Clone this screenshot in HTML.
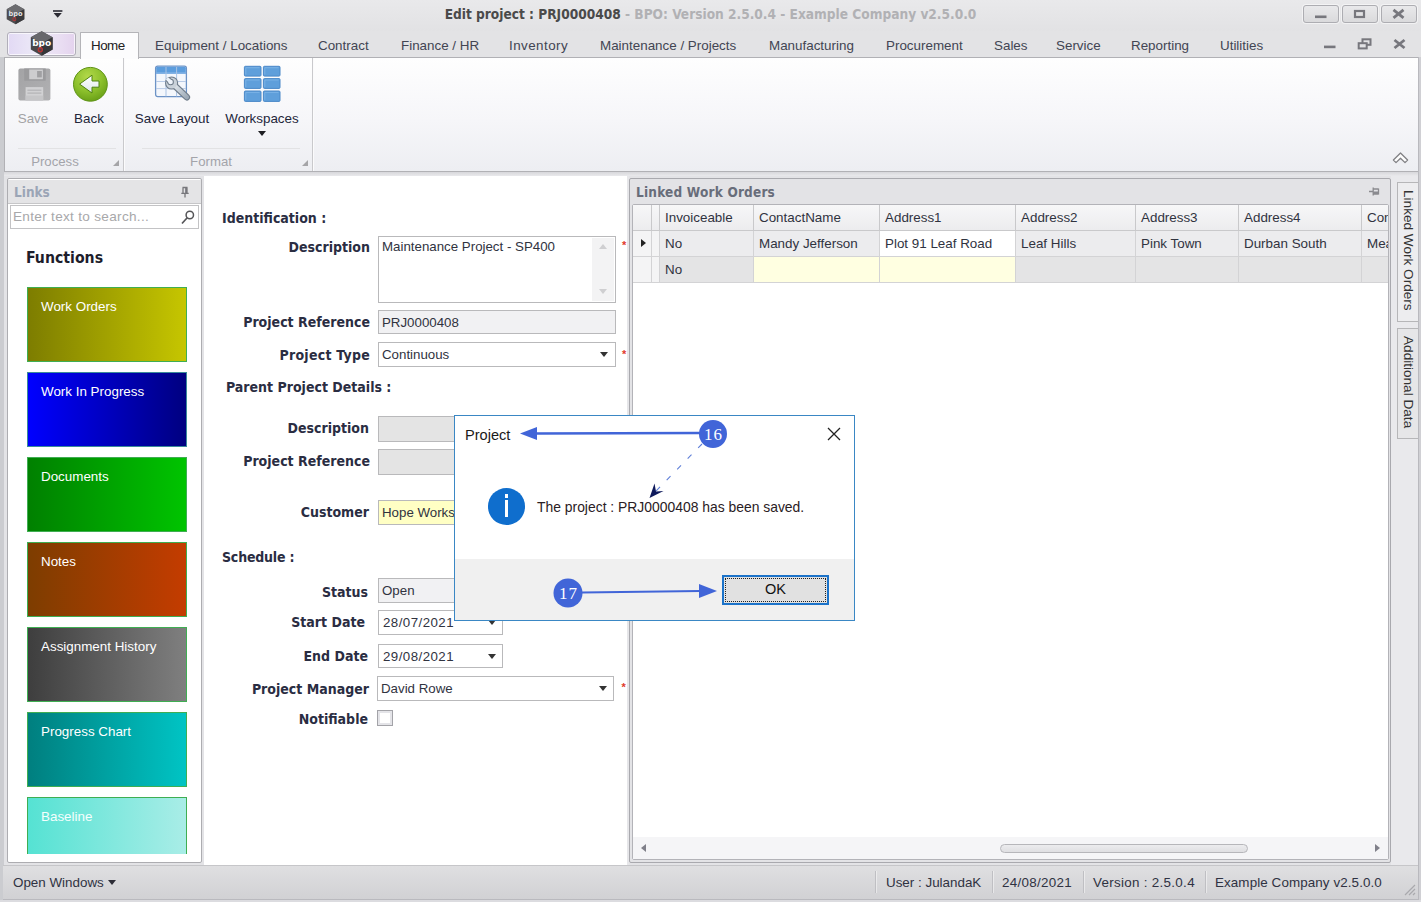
<!DOCTYPE html>
<html lang="en">
<head>
<meta charset="utf-8">
<title>Edit project : PRJ0000408</title>
<style>
*{box-sizing:border-box;margin:0;padding:0}
html,body{width:1421px;height:902px;overflow:hidden}
body{position:relative;background:#e3e3e6;font-family:"Liberation Sans",sans-serif;font-size:13.4px;color:#2a2c38}
.abs{position:absolute}
.t{position:absolute;white-space:nowrap;line-height:16px}
.b{font-family:"DejaVu Sans Condensed","Liberation Sans",sans-serif;font-weight:bold}
/* title bar */
#titlebar{left:0;top:0;width:1421px;height:31px;background:linear-gradient(#e9e9eb,#e2e2e4)}
#title{left:0;width:1421px;top:6px;text-align:center;font-size:13.6px;color:#4a4a4a}
#title span{color:#b1b1b4}
.wbtn{position:absolute;top:5px;height:18px;width:36px;border:1px solid #adadb2;border-radius:3px;background:linear-gradient(#e9e9eb,#dadadc);box-shadow:0 0 0 1px rgba(255,255,255,.5)}
/* tabs */
#tabrow{left:0;top:31px;width:1421px;height:27px;background:#e3e3e5}
.tab{position:absolute;top:38px;font-size:13.4px;color:#424553;white-space:nowrap;line-height:16px}
#hometab{left:80px;top:32px;width:59px;height:27px;background:#fcfcfd;border:1px solid #b4b4b8;border-bottom:none;border-radius:1px 1px 0 0}
#appbtn{left:7px;top:32px;width:69px;height:24px;border:1px solid #b1afb9;border-radius:3px;background:linear-gradient(90deg,#e2d9f4,#ece9f7 40%,#eadff3 75%,#e4d3ee);box-shadow:inset 0 0 0 1px rgba(255,255,255,.7)}
/* ribbon */
#ribbon{left:4px;top:57px;width:1415px;height:115px;border:1px solid #b1b1b5;background:linear-gradient(#fefefe,#f6f6f9 55%,#edeef2)}
.rlabel{position:absolute;font-size:13.4px;color:#23263a;line-height:16px;white-space:nowrap;text-align:center}
.gcap{position:absolute;top:153.7px;font-size:13.2px;color:#a3a4aa;line-height:16px;text-align:center}
.gsep{position:absolute;top:58px;width:1px;height:113px;background:#c9c9cc;box-shadow:1px 0 0 #fbfbfc}
/* panels */
.panel{position:absolute;border:1px solid #b4b4b6;background:#fff;border-radius:2px}
.phead{position:absolute;left:0;top:0;right:0;height:24px;background:#e2e2e4;border-bottom:1px solid #c8c8ca}
/* form */
.lbl{position:absolute;text-align:right;font-size:14px;color:#2a2d42;white-space:nowrap;line-height:17px}
.inp{position:absolute;border:1px solid #b9b9bb;background:#fff;font-size:13.3px;line-height:16px;padding:4px 0 0 3px;color:#30333f;white-space:nowrap;overflow:hidden}
.inp.ro{background:#f1f1f3}
.inp.dis{background:#e4e4e4}
.arr{position:absolute;width:0;height:0;border-left:4px solid transparent;border-right:4px solid transparent;border-top:5px solid #333}
.req{position:absolute;color:#e0392b;font-size:11px;font-weight:bold;line-height:10px}
/* tiles */
.tile{position:absolute;left:27px;width:160px;height:75px;border:1px solid #3fae52;color:#fff;font-size:13.4px;padding:10.6px 0 0 13px;line-height:16px}
/* grid */
.gh{position:absolute;top:205px;height:26px;border-right:1px solid #c9c9cb;border-bottom:1px solid #c9c9cb;background:linear-gradient(#f7f7f8,#ececee);font-size:13.4px;line-height:16px;padding:5px 0 0 5px;color:#30333f;overflow:hidden;white-space:nowrap}
.gc{position:absolute;height:26px;border-right:1px solid #d3d3d5;border-bottom:1px solid #d3d3d5;font-size:13.4px;line-height:16px;padding:5px 0 0 5px;color:#30333f;overflow:hidden;white-space:nowrap}
/* status */
#status{left:3px;top:865px;width:1415px;height:35px;background:linear-gradient(#dfdfe1,#d1d1d4);border-top:1px solid #c6c6c9;border-bottom:1px solid #b9b9be}
.st{position:absolute;top:875px;font-size:13.4px;color:#2f3242;line-height:16px;white-space:nowrap}
.ssep{position:absolute;top:871px;width:1px;height:22px;background:#bfbfc3;box-shadow:1px 0 0 rgba(255,255,255,.45)}
</style>
</head>
<body>
<!-- TITLE BAR -->
<div id="titlebar" class="abs"></div>
<div id="title" class="t b">Edit project : PRJ0000408<span> - BPO: Version 2.5.0.4 - Example Company v2.5.0.0</span></div>
<!-- TABS -->
<div id="tabrow" class="abs"></div>
<div id="appbtn" class="abs"></div>
<div id="ribbon" class="abs"></div>
<div id="hometab" class="abs"></div>
<div class="tab" style="left:91px;color:#222;letter-spacing:-.5px">Home</div>
<div class="tab" style="left:155px">Equipment / Locations</div>
<div class="tab" style="left:318px">Contract</div>
<div class="tab" style="left:401px">Finance / HR</div>
<div class="tab" style="left:509px;letter-spacing:.45px">Inventory</div>
<div class="tab" style="left:600px">Maintenance / Projects</div>
<div class="tab" style="left:769px">Manufacturing</div>
<div class="tab" style="left:886px">Procurement</div>
<div class="tab" style="left:994px">Sales</div>
<div class="tab" style="left:1056px">Service</div>
<div class="tab" style="left:1131px">Reporting</div>
<div class="tab" style="left:1220px">Utilities</div>
<!-- RIBBON CONTENT -->
<div class="rlabel" style="left:8px;width:50px;top:110.5px;color:#a3a3a5">Save</div>
<div class="rlabel" style="left:64px;width:50px;top:110.5px">Back</div>
<div class="rlabel" style="left:127px;width:90px;top:110.5px">Save Layout</div>
<div class="rlabel" style="left:217px;width:90px;top:110.5px">Workspaces</div>
<div class="gcap" style="left:5px;width:100px">Process</div>
<div class="gcap" style="left:124px;width:174px">Format</div>
<div class="gsep" style="left:123px"></div>
<div class="gsep" style="left:312px"></div>

<!-- WINDOW EDGES -->
<div class="abs" style="left:0;top:57px;width:3.5px;height:845px;background:#cbccd0"></div>
<div class="abs" style="left:1418px;top:57px;width:1px;height:845px;background:#b9b9be"></div>
<div class="abs" style="left:1419px;top:57px;width:2px;height:845px;background:#d0d0d4"></div>
<div class="abs" style="left:0;top:900px;width:1421px;height:2px;background:#dcdce0"></div>
<!-- LINKS PANEL -->
<div class="panel" style="left:7px;top:178px;width:195px;height:685px;border-color:#adadb1"></div>
<div class="abs" style="left:8px;top:180px;width:193px;height:24px;background:#e4e4e6;border-bottom:1px solid #c6c6c8"></div>
<div class="t b" style="left:14px;top:184px;font-size:13.5px;color:#9ba5b6">Links</div>
<div class="abs" style="left:10px;top:205px;width:189px;height:24px;border:1px solid #c3c3c5;background:#fff"></div>
<div class="t" style="left:13px;top:209px;font-size:13.6px;letter-spacing:.3px;color:#a8a8aa">Enter text to search...</div>
<div class="t b" style="left:26px;top:248px;font-size:15.7px;line-height:20px;color:#1d1d2b">Functions</div>
<div class="tile" style="top:287px;background:linear-gradient(90deg,#7d7d00,#c6c600)">Work Orders</div>
<div class="tile" style="top:372px;background:linear-gradient(90deg,#0000ff,#000080);border-color:#3a8a9a">Work In Progress</div>
<div class="tile" style="top:457px;background:linear-gradient(90deg,#008000,#00c400)">Documents</div>
<div class="tile" style="top:542px;background:linear-gradient(90deg,#7d3d00,#c43c00)">Notes</div>
<div class="tile" style="top:627px;background:linear-gradient(90deg,#3e3e3e,#7f7f7f)">Assignment History</div>
<div class="tile" style="top:712px;background:linear-gradient(90deg,#007f7f,#00c4c4)">Progress Chart</div>
<div class="tile" style="top:797px;height:57px;border-bottom:none;background:linear-gradient(90deg,#55e2d3,#a9ede7);color:#f4fffd">Baseline</div>
<!-- FORM AREA -->
<div class="abs" style="left:4px;top:172px;width:1414px;height:4px;background:linear-gradient(#d7d7db,#e9e9ec)"></div>
<div class="abs" style="left:204px;top:176px;width:423px;height:689px;background:#fff"></div>
<div class="abs" style="left:627px;top:176px;width:2px;height:689px;background:#e6e6e9"></div>
<div class="lbl b" style="left:222px;top:210px;text-align:left">Identification :</div>
<div class="lbl b" style="left:200px;width:170px;top:239px">Description</div>
<div class="lbl b" style="left:200px;width:170px;top:314px">Project Reference</div>
<div class="lbl b" style="left:200px;width:170px;top:347px;letter-spacing:.25px">Project Type</div>
<div class="lbl b" style="left:226px;top:379px;text-align:left">Parent Project Details :</div>
<div class="lbl b" style="left:200px;width:169px;top:420px">Description</div>
<div class="lbl b" style="left:200px;width:170px;top:453px">Project Reference</div>
<div class="lbl b" style="left:200px;width:169px;top:504px">Customer</div>
<div class="lbl b" style="left:222px;top:549px;text-align:left;letter-spacing:-.2px">Schedule :</div>
<div class="lbl b" style="left:200px;width:168px;top:584px">Status</div>
<div class="lbl b" style="left:200px;width:165px;top:614px">Start Date</div>
<div class="lbl b" style="left:200px;width:168px;top:648px">End Date</div>
<div class="lbl b" style="left:200px;width:169px;top:681px">Project Manager</div>
<div class="lbl b" style="left:200px;width:168px;top:711px">Notifiable</div>
<div class="inp" style="left:378px;top:236px;width:238px;height:67px;padding-top:2px">Maintenance Project - SP400</div>
<div class="abs" style="left:592px;top:238px;width:22px;height:63px;background:#f3f3f4"></div>
<div class="arr" style="left:599px;top:244px;border-top:none;border-bottom:5px solid #cfcfd1"></div>
<div class="arr" style="left:599px;top:289px;border-top-color:#cfcfd1"></div>
<div class="inp ro" style="left:378px;top:310px;width:238px;height:24px">PRJ0000408</div>
<div class="inp" style="left:378px;top:342px;width:238px;height:25px">Continuous</div>
<div class="arr" style="left:600px;top:352px"></div>
<div class="inp dis" style="left:378px;top:416px;width:120px;height:26px"></div>
<div class="inp dis" style="left:378px;top:449px;width:120px;height:26px"></div>
<div class="inp" style="left:378px;top:500px;width:120px;height:25px;background:#ffffc4">Hope Works</div>
<div class="inp ro" style="left:378px;top:577.5px;width:120px;height:25px">Open</div>
<div class="inp" style="left:378px;top:610px;width:125px;height:25px;letter-spacing:.45px;padding-left:4px">28/07/2021</div>
<div class="arr" style="left:488px;top:620px"></div>
<div class="inp" style="left:378px;top:644px;width:125px;height:24px;letter-spacing:.45px;padding-left:4px">29/08/2021</div>
<div class="arr" style="left:488px;top:654px"></div>
<div class="inp" style="left:377px;top:676px;width:237px;height:25px">David Rowe</div>
<div class="arr" style="left:599px;top:686px"></div>
<div class="abs" style="left:377px;top:710px;width:16px;height:16px;border:1px solid #a3a3a8;background:#fff;box-shadow:inset 0 0 0 2px #e4e4e8"></div>
<div class="req" style="left:622px;top:240px">*</div>
<div class="req" style="left:622px;top:349px">*</div>
<div class="req" style="left:621.5px;top:682px">*</div>
<!-- GRID PANEL -->
<div class="panel" style="left:629px;top:178px;width:762px;height:685px;border-color:#a9a9ae;background:#e3e3e6"></div>
<div class="panel" style="left:632px;top:204px;width:757px;height:656px;border-color:#b3b3b8"></div>
<div class="t b" style="left:636px;top:183.7px;font-size:13.5px;letter-spacing:.2px;color:#686d7a">Linked Work Orders</div>
<div class="gh" style="left:633px;width:19px"></div>
<div class="gh" style="left:652px;width:8px"></div>
<div class="gh" style="left:660px;width:94px">Invoiceable</div>
<div class="gh" style="left:754px;width:126px">ContactName</div>
<div class="gh" style="left:880px;width:136px">Address1</div>
<div class="gh" style="left:1016px;width:120px">Address2</div>
<div class="gh" style="left:1136px;width:103px">Address3</div>
<div class="gh" style="left:1239px;width:123px">Address4</div>
<div class="gh" style="left:1362px;width:26px;border-right:none">Con</div>
<!-- row 1 -->
<div class="gc" style="top:231px;left:633px;width:19px;background:#f4f4f5"></div>
<div class="gc" style="top:231px;left:652px;width:8px;background:#f4f4f5"></div>
<div class="gc" style="top:231px;left:660px;width:94px;background:#ececee">No</div>
<div class="gc" style="top:231px;left:754px;width:126px;background:#ececee">Mandy Jefferson</div>
<div class="gc" style="top:231px;left:880px;width:136px;background:#fff">Plot 91 Leaf Road</div>
<div class="gc" style="top:231px;left:1016px;width:120px;background:#ececee">Leaf Hills</div>
<div class="gc" style="top:231px;left:1136px;width:103px;background:#ececee">Pink Town</div>
<div class="gc" style="top:231px;left:1239px;width:123px;background:#ececee">Durban South</div>
<div class="gc" style="top:231px;left:1362px;width:26px;background:#ececee;border-right:none">Mea</div>
<!-- row 2 -->
<div class="gc" style="top:257px;left:633px;width:19px;background:#f4f4f5"></div>
<div class="gc" style="top:257px;left:652px;width:8px;background:#f4f4f5"></div>
<div class="gc" style="top:257px;left:660px;width:94px;background:#e4e4e5">No</div>
<div class="gc" style="top:257px;left:754px;width:126px;background:#ffffe1"></div>
<div class="gc" style="top:257px;left:880px;width:136px;background:#ffffe1"></div>
<div class="gc" style="top:257px;left:1016px;width:120px;background:#e4e4e5"></div>
<div class="gc" style="top:257px;left:1136px;width:103px;background:#e4e4e5"></div>
<div class="gc" style="top:257px;left:1239px;width:123px;background:#e4e4e5"></div>
<div class="gc" style="top:257px;left:1362px;width:26px;background:#e4e4e5;border-right:none"></div>
<div class="abs" style="left:641px;top:239px;width:0;height:0;border-top:4.5px solid transparent;border-bottom:4.5px solid transparent;border-left:5px solid #222"></div>
<!-- scrollbar -->
<div class="abs" style="left:633px;top:837px;width:755px;height:22px;background:#f5f5f7"></div>
<div class="abs" style="left:1000px;top:844px;width:248px;height:9px;border:1px solid #b6b6ba;border-radius:5px;background:linear-gradient(#ececee,#dfdfe2)"></div>
<div class="abs" style="left:640.5px;top:844px;width:0;height:0;border-top:4px solid transparent;border-bottom:4px solid transparent;border-right:5px solid #80808a"></div>
<div class="abs" style="left:1375px;top:844px;width:0;height:0;border-top:4px solid transparent;border-bottom:4px solid transparent;border-left:5px solid #80808a"></div>
<!-- RIGHT TABS -->
<div class="abs" style="left:1391px;top:176px;width:27px;height:689px;background:#e9e9ec"></div>
<div class="abs" style="left:1397px;top:182px;width:21px;height:140px;border:1px solid #b6b6b8;border-right:none;background:#ededef"></div>
<div class="abs" style="left:1397px;top:328px;width:21px;height:111px;border:1px solid #b6b6b8;border-right:none;background:#e6e6e8"></div>
<div class="t" style="left:1400px;top:190px;writing-mode:vertical-rl;font-size:13.6px;color:#333;line-height:16px">Linked Work Orders</div>
<div class="t" style="left:1400px;top:336px;writing-mode:vertical-rl;font-size:13.6px;color:#333;line-height:16px">Additional Data</div>

<!-- DIALOG -->
<div class="abs" style="left:454px;top:415px;width:401px;height:206px;border:1px solid #3a87c4;background:#fff"></div>
<div class="abs" style="left:455px;top:559px;width:399px;height:61px;background:#f0f0f0"></div>
<div class="t" style="left:465px;top:425.6px;font-size:14.6px;line-height:18px;color:#1a1a1a">Project</div>
<svg class="abs" style="left:826px;top:426px" width="16" height="16" viewBox="0 0 16 16"><path d="M2 2 L14 14 M14 2 L2 14" stroke="#222" stroke-width="1.3" fill="none"/></svg>
<div class="abs" style="left:487.5px;top:488px;width:37.5px;height:37px;border-radius:50%;background:#0f6ecd"></div>
<div class="abs" style="left:504.5px;top:494px;width:3px;height:3.5px;background:#fff"></div>
<div class="abs" style="left:504.5px;top:500px;width:3px;height:17px;background:#fff"></div>
<div class="t" style="left:537px;top:497.8px;font-size:13.9px;line-height:18px;color:#2a2024">The project : PRJ0000408 has been saved.</div>
<div class="abs" style="left:722px;top:575px;width:107px;height:30px;border:2px solid #1c73c9;background:#e1e1e1"></div>
<div class="abs" style="left:725px;top:578px;width:101px;height:24px;border:1px dotted #222"></div>
<div class="t" style="left:722px;width:107px;top:580px;text-align:center;font-size:14.5px;line-height:18px;color:#111">OK</div>
<!-- ANNOTATIONS -->
<svg class="abs" style="left:0;top:0;pointer-events:none" width="1421" height="902" viewBox="0 0 1421 902">
<line x1="536" y1="433.5" x2="700" y2="433" stroke="#4165d8" stroke-width="2.4"/>
<polygon points="520,433.5 537,427 537,440" fill="#4165d8"/>
<circle cx="713" cy="434" r="14" fill="#4165d8"/>
<text x="713.4" y="440" text-anchor="middle" font-family="'Liberation Serif',serif" font-size="17" letter-spacing=".8" fill="#fff">16</text>
<line x1="702" y1="444" x2="656" y2="491" stroke="#5f7fd8" stroke-width="1.1" stroke-dasharray="5.5 9.5"/>
<path d="M649.5 498 L654.5 483.5 L656 491.5 L663.5 491 Z" fill="#0f1a5c"/>
<circle cx="568" cy="593" r="14.5" fill="#4165d8"/>
<text x="568.4" y="599" text-anchor="middle" font-family="'Liberation Serif',serif" font-size="17" letter-spacing=".8" fill="#fff">17</text>
<line x1="582" y1="592.5" x2="700" y2="591" stroke="#4165d8" stroke-width="2.2"/>
<polygon points="717,591 699,584 699,598" fill="#4165d8"/>
</svg>
<!-- STATUS BAR -->
<!--ICONS-->
<div id="status" class="abs"></div>
<div class="st" style="left:13px">Open Windows</div>
<div class="st" style="left:886px">User : JulandaK</div>
<div class="st" style="left:1002px;letter-spacing:.3px">24/08/2021</div>
<div class="st" style="left:1093px;letter-spacing:.3px">Version : 2.5.0.4</div>
<div class="st" style="left:1215px;letter-spacing:.1px">Example Company v2.5.0.0</div>

<!-- WINDOW BUTTONS -->
<div class="wbtn" style="left:1303px"></div>
<div class="wbtn" style="left:1342px"></div>
<div class="wbtn" style="left:1381px"></div>
<svg class="abs" style="left:1300px;top:0" width="121" height="58" viewBox="1300 0 121 58">
<rect x="1315" y="15.5" width="11.5" height="2.6" fill="#77777d"/>
<rect x="1355" y="11" width="9" height="6" fill="none" stroke="#77777d" stroke-width="2.2"/>
<path d="M1393.5 9.8 L1403.5 17.8 M1403.5 9.8 L1393.5 17.8" stroke="#77777d" stroke-width="2.8" fill="none"/>
<rect x="1324" y="45.6" width="11.5" height="2.6" fill="#77777d"/>
<rect x="1362.5" y="39.3" width="8" height="5.5" fill="none" stroke="#77777d" stroke-width="2"/>
<rect x="1358.7" y="43.2" width="8" height="5.2" fill="#e3e3e5" stroke="#77777d" stroke-width="2"/>
<path d="M1394.5 40 L1404.5 48 M1404.5 40 L1394.5 48" stroke="#77777d" stroke-width="2.8" fill="none"/>
</svg>
<!-- TITLE ICON + QAT -->
<svg class="abs" style="left:4px;top:2px" width="24" height="24" viewBox="0 0 24 24">
<polygon points="11.5,2.3 20.3,7.3 20.3,17.3 11.5,22.3 2.7,17.3 2.7,7.3" fill="#4d4d50"/>
<polygon points="11.5,2.3 20.3,7.3 11.5,12.3 2.7,7.3" fill="#6c6c70"/>
<polygon points="11.5,12.3 20.3,7.3 20.3,17.3 11.5,22.3" fill="#3a3a3d"/>
<text x="11.5" y="13.6" text-anchor="middle" font-family="'DejaVu Sans','Liberation Sans',sans-serif" font-weight="bold" font-size="7" textLength="14" lengthAdjust="spacingAndGlyphs" fill="#e4e4e6">bpo</text>
<circle cx="10.3" cy="17.2" r="1.5" fill="none" stroke="#a33a3a" stroke-width="1.2"/>
</svg>
<svg class="abs" style="left:52px;top:9px" width="12" height="10" viewBox="0 0 12 10">
<rect x="1" y="1.2" width="9.4" height="1.6" fill="#2b2b33"/><polygon points="1.6,4 9.8,4 5.7,8.8" fill="#2b2b33"/>
</svg>
<!-- APP BUTTON HEX -->
<svg class="abs" style="left:28px;top:30px" width="28" height="28" viewBox="0 0 28 28">
<polygon points="13.7,1.2 24.6,7.3 24.6,19.5 13.7,25.7 2.8,19.5 2.8,7.3" fill="#48484b"/>
<polygon points="13.7,1.2 24.6,7.3 13.7,13.4 2.8,7.3" fill="#68686c"/>
<polygon points="13.7,13.4 24.6,7.3 24.6,19.5 13.7,25.7" fill="#363639"/>
<text x="13.7" y="15.6" text-anchor="middle" font-family="'DejaVu Sans','Liberation Sans',sans-serif" font-weight="bold" font-size="9.5" textLength="19" lengthAdjust="spacingAndGlyphs" fill="#fff">bpo</text>
<circle cx="12.3" cy="19.8" r="2" fill="none" stroke="#b53434" stroke-width="1.5"/>
</svg>
<!-- SAVE (disabled) -->
<svg class="abs" style="left:18px;top:68px" width="33" height="33" viewBox="0 0 33 33">
<defs><linearGradient id="fl" x1="0" y1="0" x2="1" y2="1"><stop offset="0" stop-color="#a3a3a5"/><stop offset="1" stop-color="#b1b1b3"/></linearGradient></defs>
<rect x="0.4" y="0.4" width="32" height="32.2" rx="2" fill="url(#fl)"/>
<rect x="6.2" y="0.4" width="21.5" height="12.3" fill="#9b9b9d"/>
<rect x="11.2" y="1.5" width="13.7" height="9.7" fill="#cdcdcf"/>
<rect x="19.1" y="3" width="4.7" height="6.4" fill="#a0a0a2"/>
<rect x="7.6" y="19.1" width="17.6" height="13.5" fill="#d1d1d3"/>
<rect x="9.4" y="21.6" width="14" height="1.2" fill="#b4b4b6"/><rect x="9.4" y="24.5" width="14" height="1.2" fill="#b4b4b6"/><rect x="7.6" y="27.6" width="17.6" height="5" fill="#c6c6c8"/>
</svg>
<!-- BACK -->
<svg class="abs" style="left:72px;top:66px" width="38" height="38" viewBox="0 0 38 38">
<defs><radialGradient id="gb" cx="42%" cy="28%" r="78%"><stop offset="0" stop-color="#b3d94a"/><stop offset=".55" stop-color="#8cc02c"/><stop offset="1" stop-color="#659c14"/></radialGradient>
<linearGradient id="ga" x1="0" y1="0" x2="0" y2="1"><stop offset="0" stop-color="#ffffff"/><stop offset="1" stop-color="#dfe8ea"/></linearGradient></defs>
<circle cx="18.4" cy="18.3" r="16.9" fill="url(#gb)" stroke="#5f9417" stroke-width="1"/>
<polygon points="7.6,18.1 20,9.2 20,15 27,15 27,21.2 20,21.2 20,27" fill="url(#ga)" stroke="#4f8210" stroke-width="1" stroke-linejoin="round"/>
</svg>
<!-- SAVE LAYOUT -->
<svg class="abs" style="left:154px;top:65px" width="38" height="38" viewBox="0 0 38 38">
<defs><linearGradient id="wr" x1="0" y1="0" x2="1" y2="1"><stop offset="0" stop-color="#dfe5ea"/><stop offset="1" stop-color="#9eabb8"/></linearGradient></defs>
<rect x="1.6" y="1.2" width="30.8" height="30.4" rx="2" fill="#f4f7fc" stroke="#6d93c6" stroke-width="1.3"/>
<path d="M2.2 3.2 Q2.2 1.8 3.6 1.8 H30.4 Q31.8 1.8 31.8 3.2 V8.9 H2.2 Z" fill="#5c9ddd"/>
<rect x="2.2" y="7.4" width="29.6" height="1.5" fill="#86b5e6"/>
<path d="M12 2V31.4 M22.6 2V31.4" stroke="#a9c3e4" stroke-width="1"/>
<path d="M2 16.5H32 M2 23.6H32" stroke="#b9cbe6" stroke-width="1"/>
<path d="M32.8 32.2 L20.5 20.5" stroke="#6f7c8a" stroke-width="6.6" stroke-linecap="round"/>
<circle cx="17.6" cy="18" r="6.6" fill="#6f7c8a"/>
<path d="M32.8 32.2 L20.5 20.5" stroke="url(#wr)" stroke-width="4.4" stroke-linecap="round"/>
<circle cx="17.6" cy="18" r="5.5" fill="#c9d1d9"/>
<clipPath id="hc"><circle cx="17.6" cy="18" r="6.6"/></clipPath>
<g clip-path="url(#hc)"><path d="M16.6 17 L9 9.4" stroke="#6f7c8a" stroke-width="5.4"/>
<circle cx="16.6" cy="17" r="3.3" fill="#6f7c8a"/>
<path d="M16.6 17 L9 9.4" stroke="#eef3fa" stroke-width="3.4"/>
<circle cx="16.6" cy="17" r="2.3" fill="#eef3fa"/></g>
</svg>
<!-- WORKSPACES -->
<svg class="abs" style="left:243px;top:65px" width="38" height="38" viewBox="0 0 38 38">
<g fill="#5f9fdb" stroke="#4a88c8" stroke-width="1">
<rect x="1.4" y="1.3" width="16.6" height="9.8" rx="1"/><rect x="20.4" y="1.3" width="16.6" height="9.8" rx="1"/>
<rect x="1.4" y="13.6" width="16.6" height="9.8" rx="1"/><rect x="20.4" y="13.6" width="16.6" height="9.8" rx="1"/>
<rect x="1.4" y="26" width="16.6" height="10.4" rx="1"/><rect x="20.4" y="26" width="16.6" height="10.4" rx="1"/>
</g>
<g fill="none" stroke="#7db4e6" stroke-width=".9">
<path d="M2.8 9.6V2.7H16.6 M21.8 9.6V2.7H35.6 M2.8 21.9V15H16.6 M21.8 21.9V15H35.6 M2.8 34.8V27.4H16.6 M21.8 34.8V27.4H35.6"/>
</g>
</svg>
<div class="arr" style="left:258px;top:131px;border-left-width:4.5px;border-right-width:4.5px;border-top-color:#1e1e22"></div>
<!-- group dividers + launchers -->
<div class="abs" style="left:18px;top:148px;width:98px;height:1px;background:#e2e2e4"></div>
<div class="abs" style="left:142px;top:148px;width:158px;height:1px;background:#e2e2e4"></div>
<svg class="abs" style="left:112px;top:159px" width="8" height="8" viewBox="0 0 8 8"><polygon points="7,1 7,7 1,7" fill="#a5a5a8"/></svg>
<svg class="abs" style="left:301px;top:159px" width="8" height="8" viewBox="0 0 8 8"><polygon points="7,1 7,7 1,7" fill="#a5a5a8"/></svg>
<!-- collapse chevron -->
<svg class="abs" style="left:1391px;top:150px" width="19" height="15" viewBox="0 0 19 15"><path d="M9.5 3 L16.6 10 L14 12.6 L9.5 8.2 L5 12.6 L2.4 10 Z" fill="#fdfdfd" stroke="#808084" stroke-width="1.3" stroke-linejoin="round"/></svg>
<!-- pins / search -->
<svg class="abs" style="left:178.5px;top:186px" width="12" height="13" viewBox="0 0 12 13"><path d="M3.5 1.5H8.5 M4 1.5V7 M8 1.5V7 M6.8 1.5V7 M2.3 7.3H9.7 M6 7.5V11.5" stroke="#77777c" stroke-width="1.3" fill="none"/></svg>
<svg class="abs" style="left:1368px;top:186px" width="13" height="12" viewBox="0 0 13 12"><path d="M10.5 2.5V8.5 M10.5 3H5.5 M10.5 8H5.5 M10.5 7H5.5 M5.2 1.5V9.5 M5 5.5H1" stroke="#8a8a8f" stroke-width="1.3" fill="none"/><rect x="5.5" y="5.5" width="5" height="2.5" fill="#8a8a8f"/></svg>
<svg class="abs" style="left:180px;top:209px" width="16" height="16" viewBox="0 0 16 16"><circle cx="9.8" cy="6" r="3.7" fill="none" stroke="#555558" stroke-width="1.5"/><path d="M7.2 8.8 L2 14.5" stroke="#555558" stroke-width="1.7"/></svg>
<!-- status bits -->
<div class="arr" style="left:108px;top:880px;border-top-color:#2c2c36"></div>
<div class="ssep" style="left:874.5px"></div><div class="ssep" style="left:992px"></div><div class="ssep" style="left:1083px"></div><div class="ssep" style="left:1205px"></div>
<svg class="abs" style="left:1402px;top:882px" width="14" height="14" viewBox="0 0 14 14"><path d="M13 3 L3 13 M13 7 L7 13 M13 11 L11 13" stroke="#a9a9ad" stroke-width="1.2"/></svg>
</body>
</html>
